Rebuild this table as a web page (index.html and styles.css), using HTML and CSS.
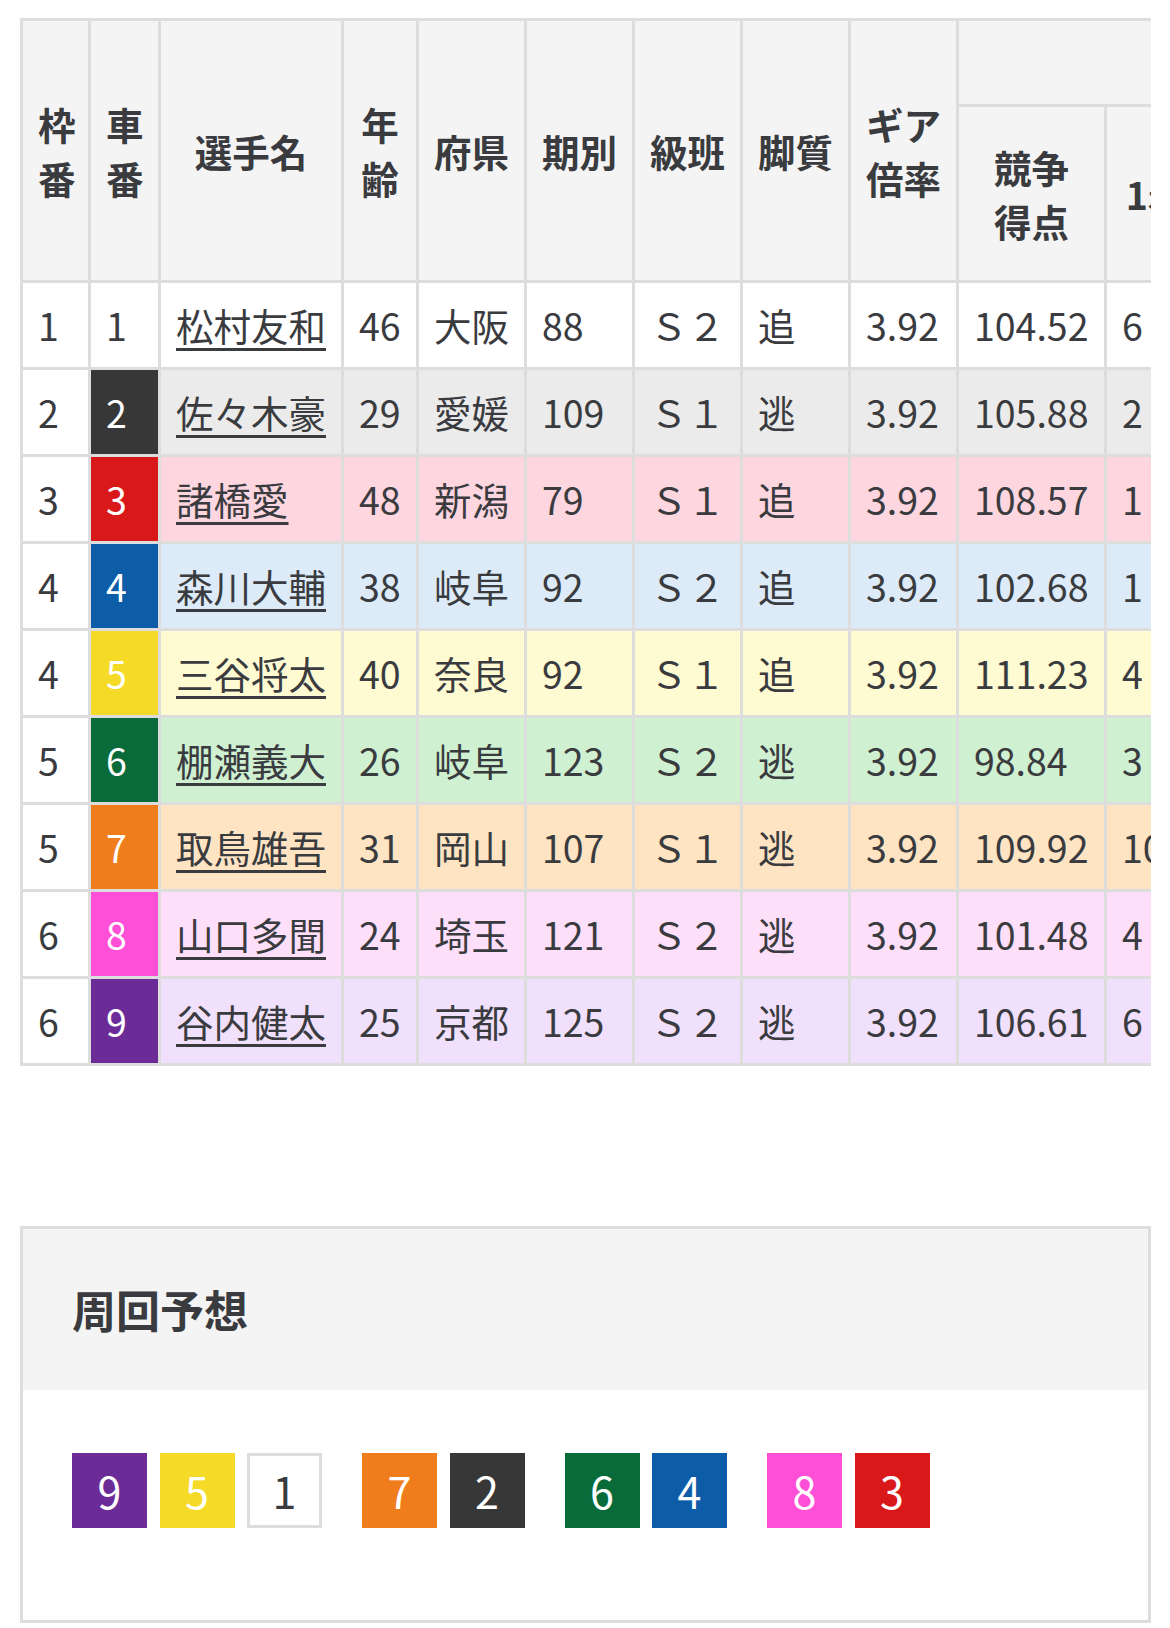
FILE: index.html
```html
<!DOCTYPE html>
<html lang="ja">
<head>
<meta charset="utf-8">
<title>出走表</title>
<link rel="stylesheet" href="styles.css">
</head>
<body>
<div class="table-scroll">
  <table class="entry-table">
    <colgroup>
      <col class="w-waku"><col class="w-sha"><col class="w-name"><col class="w-age"><col class="w-std"><col class="w-std"><col class="w-std"><col class="w-std"><col class="w-std"><col class="w-score"><col class="w-cnt"><col class="w-cnt"><col class="w-cnt"><col class="w-cnt">
    </colgroup>
    <thead>
      <tr class="head-top">
        <th rowspan="2">枠<br>番</th>
        <th rowspan="2">車<br>番</th>
        <th rowspan="2">選手名</th>
        <th rowspan="2">年<br>齢</th>
        <th rowspan="2">府県</th>
        <th rowspan="2">期別</th>
        <th rowspan="2">級班</th>
        <th rowspan="2">脚質</th>
        <th rowspan="2">ギア<br>倍率</th>
        <th colspan="5" class="group">成績</th>
      </tr>
      <tr class="head-sub">
        <th>競争<br>得点</th>
        <th>1着</th>
        <th>2着</th>
        <th>3着</th>
        <th>着外</th>
      </tr>
    </thead>
    <tbody>
      <tr class="r1"><td>1</td><td class="car c1">1</td><td><a href="#">松村友和</a></td><td>46</td><td>大阪</td><td>88</td><td>Ｓ２</td><td>追</td><td>3.92</td><td>104.52</td><td>6</td><td>5</td><td>4</td><td>12</td></tr>
      <tr class="r2"><td>2</td><td class="car c2">2</td><td><a href="#">佐々木豪</a></td><td>29</td><td>愛媛</td><td>109</td><td>Ｓ１</td><td>逃</td><td>3.92</td><td>105.88</td><td>2</td><td>6</td><td>3</td><td>14</td></tr>
      <tr class="r3"><td>3</td><td class="car c3">3</td><td><a href="#">諸橋愛</a></td><td>48</td><td>新潟</td><td>79</td><td>Ｓ１</td><td>追</td><td>3.92</td><td>108.57</td><td>1</td><td>4</td><td>6</td><td>10</td></tr>
      <tr class="r4"><td>4</td><td class="car c4">4</td><td><a href="#">森川大輔</a></td><td>38</td><td>岐阜</td><td>92</td><td>Ｓ２</td><td>追</td><td>3.92</td><td>102.68</td><td>1</td><td>3</td><td>2</td><td>15</td></tr>
      <tr class="r5"><td>4</td><td class="car c5">5</td><td><a href="#">三谷将太</a></td><td>40</td><td>奈良</td><td>92</td><td>Ｓ１</td><td>追</td><td>3.92</td><td>111.23</td><td>4</td><td>5</td><td>3</td><td>9</td></tr>
      <tr class="r6"><td>5</td><td class="car c6">6</td><td><a href="#">棚瀬義大</a></td><td>26</td><td>岐阜</td><td>123</td><td>Ｓ２</td><td>逃</td><td>3.92</td><td>98.84</td><td>3</td><td>2</td><td>4</td><td>13</td></tr>
      <tr class="r7"><td>5</td><td class="car c7">7</td><td><a href="#">取鳥雄吾</a></td><td>31</td><td>岡山</td><td>107</td><td>Ｓ１</td><td>逃</td><td>3.92</td><td>109.92</td><td>10</td><td>4</td><td>2</td><td>8</td></tr>
      <tr class="r8"><td>6</td><td class="car c8">8</td><td><a href="#">山口多聞</a></td><td>24</td><td>埼玉</td><td>121</td><td>Ｓ２</td><td>逃</td><td>3.92</td><td>101.48</td><td>4</td><td>3</td><td>5</td><td>11</td></tr>
      <tr class="r9"><td>6</td><td class="car c9">9</td><td><a href="#">谷内健太</a></td><td>25</td><td>京都</td><td>125</td><td>Ｓ２</td><td>逃</td><td>3.92</td><td>106.61</td><td>6</td><td>4</td><td>3</td><td>10</td></tr>
    </tbody>
  </table>
</div>

<section class="forecast">
  <h2 class="forecast-title">周回予想</h2>
  <div class="forecast-body">
    <div class="line">
      <div class="grp"><span class="sq c9">9</span><span class="sq c5">5</span><span class="sq c1">1</span></div>
      <div class="grp"><span class="sq c7">7</span><span class="sq c2">2</span></div>
      <div class="grp"><span class="sq c6">6</span><span class="sq c4">4</span></div>
      <div class="grp"><span class="sq c8">8</span><span class="sq c3">3</span></div>
    </div>
  </div>
</section>
</body>
</html>
```

FILE: styles.css
```css
html, body {
  margin: 0;
  padding: 0;
  background: #fff;
}
body {
  font-family: "Noto Sans CJK JP", "Noto Sans", sans-serif;
  color: #3a3b3f;
  font-size: 37.5px;
  line-height: 54px;
  padding: 18px 19px 0 20px;
}

.table-scroll {
  overflow: hidden;
  width: 1131px;
}

.entry-table {
  table-layout: fixed;
  width: 1487px;
  border-collapse: separate;
  border-spacing: 0;
  border-top: 3px solid #dddddd;
  border-left: 3px solid #dddddd;
}
.w-waku { width: 68px; }
.w-sha { width: 70px; }
.w-name { width: 183px; }
.w-age { width: 75px; }
.w-std { width: 108px; }
.w-score { width: 148px; }
.w-cnt { width: 100px; }

.entry-table th,
.entry-table td {
  border-right: 3px solid #dddddd;
  border-bottom: 3px solid #dddddd;
  padding: 15px;
  white-space: nowrap;
  overflow: hidden;
}
.entry-table th {
  background: #f4f4f4;
  font-weight: 700;
  text-align: center;
  vertical-align: middle;
}
.head-top th.group {
  padding: 0 15px;
  height: 83px;
}
.head-sub th { height: 143px; }

.entry-table td {
  height: 54px;
  text-align: left;
  vertical-align: middle;
  background: #fff;
}
.entry-table td a {
  color: #3a3b3f;
  text-decoration: underline;
  text-decoration-thickness: 3px;
  text-underline-offset: 7px;
}

.r1 td { background: #ffffff; }
.r2 td { background: #ebebeb; }
.r3 td { background: #fdd6df; }
.r4 td { background: #dcebf7; }
.r5 td { background: #fefad2; }
.r6 td { background: #cff0d1; }
.r7 td { background: #fee4c2; }
.r8 td { background: #fddffa; }
.r9 td { background: #f0e0fc; }
.entry-table tbody td:first-child { background: #fff; }

.c1 { background: #fff; color: #3a3b3f; }
.c2 { background: #373737; color: #fff; }
.c3 { background: #d9181a; color: #fff; }
.c4 { background: #0c5ca8; color: #fff; }
.c5 { background: #f5db27; color: #fff; }
.c6 { background: #0a6b3a; color: #fff; }
.c7 { background: #ef7d1c; color: #fff; }
.c8 { background: #ff4fd6; color: #fff; }
.c9 { background: #6b2c97; color: #fff; }

.entry-table td.car.c1 { background: #fff; color: #3a3b3f; }
.entry-table td.car.c2 { background: #373737; color: #fff; }
.entry-table td.car.c3 { background: #d9181a; color: #fff; }
.entry-table td.car.c4 { background: #0c5ca8; color: #fff; }
.entry-table td.car.c5 { background: #f5db27; color: #fff; }
.entry-table td.car.c6 { background: #0a6b3a; color: #fff; }
.entry-table td.car.c7 { background: #ef7d1c; color: #fff; }
.entry-table td.car.c8 { background: #ff4fd6; color: #fff; }
.entry-table td.car.c9 { background: #6b2c97; color: #fff; }

.forecast {
  margin-top: 160px;
  width: 1125px;
  border: 3px solid #dddddd;
}
.forecast-title {
  margin: 0;
  background: #f4f4f4;
  padding: 49px 49px;
  font-size: 44px;
  line-height: 63px;
  font-weight: 700;
}
.forecast-body {
  padding: 63px 49px 92px;
}
.line {
  display: flex;
  gap: 40px;
}
.grp {
  display: flex;
  gap: 12.5px;
}
.sq {
  width: 75px;
  height: 75px;
  box-sizing: border-box;
  display: flex;
  align-items: center;
  justify-content: center;
  font-size: 43px;
  line-height: 1;
}
.sq.c1 {
  border: 3px solid #dddddd;
}
```
